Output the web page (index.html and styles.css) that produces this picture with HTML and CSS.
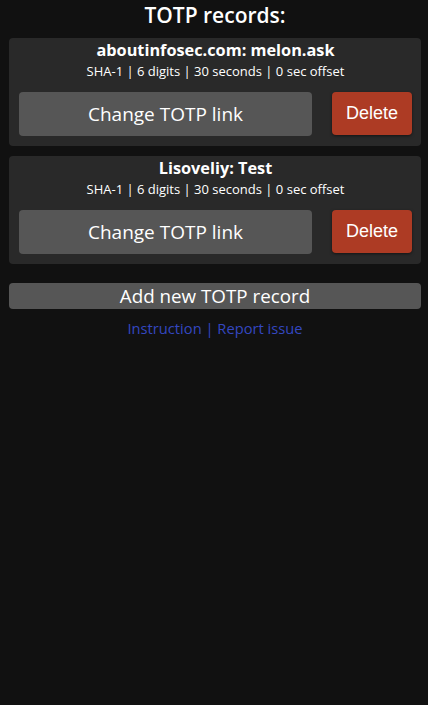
FILE: index.html
```html
<!DOCTYPE html>
<html>
<head>
<meta charset="utf-8">
<link rel="stylesheet" href="styles.css">
</head>
<body>
<h1 class="title">TOTP records:</h1>
<div class="card">
  <div class="name">aboutinfosec.com: melon.ask</div>
  <div class="meta">SHA-1 | 6 digits | 30 seconds | 0 sec offset</div>
  <div class="actions">
    <button class="btn change">Change TOTP link</button>
    <button class="btn delete">Delete</button>
  </div>
</div>
<div class="card">
  <div class="name">Lisoveliy: Test</div>
  <div class="meta">SHA-1 | 6 digits | 30 seconds | 0 sec offset</div>
  <div class="actions">
    <button class="btn change">Change TOTP link</button>
    <button class="btn delete">Delete</button>
  </div>
</div>
<button class="btn add">Add new TOTP record</button>
<div class="links"><a href="#">Instruction</a> | <a href="#">Report issue</a></div>
</body>
</html>
```
FILE: styles.css
```css
html, body {
  margin: 0;
  background: #111111;
  color: #ffffff;
  font-family: "Open Sans", "Noto Sans", sans-serif;
}
body {
  padding: 0 7px 0 9px;
  display: flex;
  flex-direction: column;
}
.title {
  margin: 0;
  padding-top: 1px;
  height: 37px;
  text-align: center;
  font-size: 21px;
  font-weight: 600;
  line-height: 28px;
}
.card {
  background: #292929;
  border-radius: 4px;
  padding: 1px 9px 10px 10px;
  margin-bottom: 10px;
  display: flex;
  flex-direction: column;
  align-items: center;
}
.name {
  font-size: 16.3px;
  font-weight: 700;
  line-height: 22px;
}
.meta {
  font-size: 13px;
  line-height: 20px;
  margin-bottom: 11px;
}
.actions {
  display: flex;
  gap: 20px;
  width: 100%;
}
.btn {
  border: none;
  color: #ffffff;
  border-radius: 4px;
  padding: 0;
  cursor: pointer;
}
.change {
  flex: 1;
  height: 44px;
  background: #565656;
  font-family: "Open Sans", "Noto Sans", sans-serif;
  font-size: 19px;
}
.delete {
  width: 80px;
  height: 43px;
  background: #ad3b24;
  font-family: "Liberation Sans", Arial, sans-serif;
  font-size: 18px;
  box-shadow: 0 1px 3px rgba(0,0,0,0.5);
}
.add {
  margin-top: 9px;
  height: 26px;
  background: #565656;
  font-family: "Open Sans", "Noto Sans", sans-serif;
  font-size: 18.8px;
  line-height: 26px;
}
.links {
  margin-top: 9px;
  text-align: center;
  font-size: 14.7px;
  line-height: 20px;
  color: #3447c0;
}
.links a {
  color: #3447c0;
  text-decoration: none;
}
```
